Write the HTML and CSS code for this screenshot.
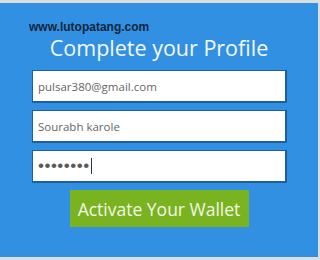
FILE: index.html
```html
<!DOCTYPE html>
<html>
<head>
<meta charset="utf-8">
<link rel="stylesheet" href="styles.css">
</head>
<body>
<div class="panel">
  <div class="site">www.lutopatang.com</div>
  <h1 class="title">Complete your Profile</h1>
  <div class="fields">
    <div class="field">pulsar380@gmail.com</div>
    <div class="field">Sourabh karole</div>
    <div class="field pass"><span class="dots">&#8226;&#8226;&#8226;&#8226;&#8226;&#8226;&#8226;&#8226;</span><span class="caret"></span></div>
  </div>
  <div class="actions"><div class="btn">Activate Your Wallet</div></div>
</div>
</body>
</html>
```
FILE: styles.css
```css
html, body { margin: 0; padding: 0; }
body {
  width: 320px;
  height: 260px;
  background: #dcdfe2;
  overflow: hidden;
}
.panel {
  margin-top: 3px;
  width: 318px;
  height: 254px;
  background: #3190e2;
  box-sizing: border-box;
  padding-top: 17px;
}
.site {
  padding-left: 29px;
  font-family: "Liberation Sans", Arial, sans-serif;
  font-weight: bold;
  font-size: 12px;
  line-height: 14px;
  color: #14243a;
}
.title {
  margin: 0;
  text-align: center;
  font-family: "Open Sans", sans-serif;
  font-weight: normal;
  font-size: 21.5px;
  line-height: 28px;
  color: #f4f8fc;
}
.fields {
  margin-top: 8px;
  margin-left: 32px;
  width: 255px;
  display: flex;
  flex-direction: column;
  gap: 7px;
}
.field {
  height: 33px;
  box-sizing: border-box;
  background: #fff;
  border: 1px solid #1f5f9c;
  border-right-width: 2px;
  border-bottom-width: 2px;
  padding-left: 5px;
  display: flex;
  align-items: center;
  font-family: "Open Sans", sans-serif;
  font-size: 11.5px;
  color: #666;
}
.dots {
  font-family: "Liberation Sans", Arial, sans-serif;
  font-size: 17px;
  color: #5a5a5a;
  letter-spacing: 0.5px;
}
.caret {
  display: inline-block;
  width: 1px;
  height: 16px;
  background: #333;
  margin-left: 1px;
}
.actions {
  margin-top: 7px;
  display: flex;
  justify-content: center;
}
.btn {
  width: 179px;
  height: 37px;
  background: #79b31f;
  display: flex;
  align-items: center;
  justify-content: center;
  font-family: "Open Sans", sans-serif;
  font-size: 17.5px;
  color: #f3f6e8;
}
```
